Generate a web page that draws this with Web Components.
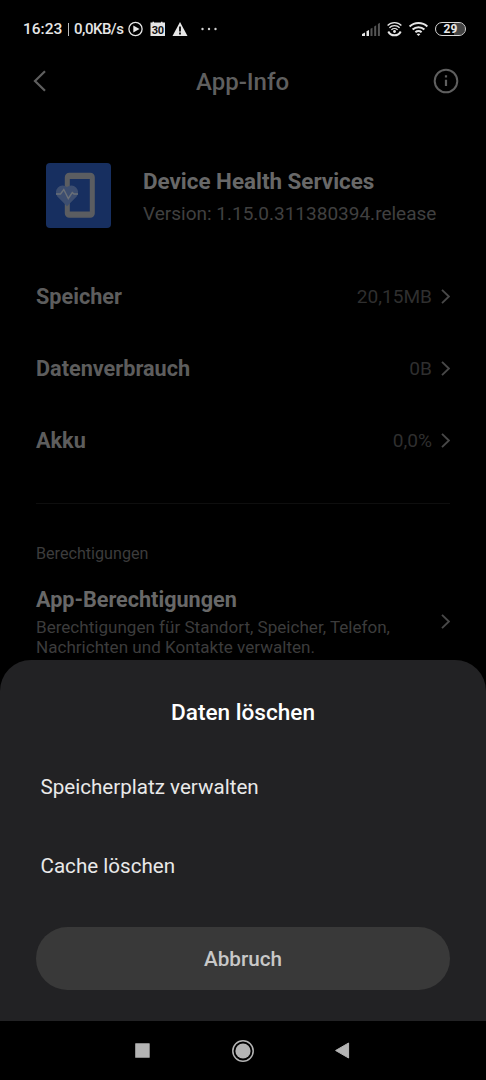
<!DOCTYPE html>
<html lang="de">
<head>
<meta charset="utf-8">
<title>App-Info</title>
<style>
  html, body { margin: 0; height: 100%; background: #000; }
  body { font-family: Roboto, "Noto Sans", sans-serif; overflow: hidden; }
</style>
</head>
<body>
<app-screen>
  <status-bar slot="status" time="16:23" speed="0,0KB/s" battery="29"></status-bar>
  <title-bar>App-Info</title-bar>
  <app-summary name="Device Health Services" version="Version: 1.15.0.311380394.release"></app-summary>
  <info-row value="20,15MB">Speicher</info-row>
  <info-row value="0B">Datenverbrauch</info-row>
  <info-row value="0,0%">Akku</info-row>
  <permission-section heading="Berechtigungen" label="App-Berechtigungen">Berechtigungen für Standort, Speicher, Telefon, Nachrichten und Kontakte verwalten.</permission-section>
  <action-sheet slot="sheet" heading="Daten löschen" cancel="Abbruch">
    <sheet-item>Speicherplatz verwalten</sheet-item>
    <sheet-item>Cache löschen</sheet-item>
  </action-sheet>
  <nav-bar slot="nav"></nav-bar>
</app-screen>

<script>
const chevron = `<svg width="9" height="15" viewBox="0 0 9 15" fill="none" stroke="#484848" stroke-width="1.9"><path d="M1 .9 7.9 7.5 1 14.1"/></svg>`;

class BaseElement extends HTMLElement {
  connectedCallback() {
    if (this.shadowRoot) return;
    this.attachShadow({ mode: "open" });
    this.shadowRoot.innerHTML = this.template();
  }

  attr(name) {
    return this.getAttribute(name) || "";
  }
}

class AppScreen extends BaseElement {
  template() {
    return `
      <style>
        :host { display: flex; flex-direction: column; width: 486px; height: 1080px; background: #000; }
        main { flex: 1; min-height: 0; overflow: hidden; }
      </style>
      <slot name="status"></slot>
      <main><slot></slot></main>
      <slot name="sheet"></slot>
      <slot name="nav"></slot>
    `;
  }
}

class StatusBar extends BaseElement {
  template() {
    return `
      <style>
        :host { display: flex; justify-content: space-between; height: 57px; box-sizing: border-box; padding: 0 20px 0 23px; color: #e6e6e6; font-size: 15.5px; font-weight: 500; }
        .side { display: flex; align-items: center; height: 57px; }
        svg { display: block; flex: none; }
        .time { width: 39px; white-space: nowrap; }
        .bar { width: 1px; height: 13px; margin: 2px 5px 0 6px; background: #bbb; }
        .speed { width: 50px; margin-right: 3px; white-space: nowrap; font-size: 15px; letter-spacing: -.5px; }
        .battery { display: flex; align-items: center; justify-content: center; box-sizing: border-box; width: 31px; height: 14px; margin-left: 7px; border: 1.5px solid #d8d8d8; border-radius: 7px; background: linear-gradient(90deg, #000 62%, #444 62%); background-clip: padding-box; font-size: 12px; font-weight: 700; line-height: 12px; }
        .date { font: 700 11px Roboto, sans-serif; letter-spacing: -.3px; }
      </style>
      <div class="side">
        <span class="time">${this.attr("time")}</span>
        <span class="bar"></span>
        <span class="speed">${this.attr("speed")}</span>
        <svg width="90" height="16" viewBox="0 0 90 16">
          <circle cx="8.5" cy="8" r="6.6" fill="none" stroke="#e6e6e6" stroke-width="1.3"/>
          <path d="M6.300 4.500v7l6.200-3.500z" fill="#e6e6e6"/>
          <path d="M23.500 1.500h2V.8H27v.7h7V.8h1.500v.7H38V15H23.500z" fill="#e6e6e6"/>
          <text class="date" x="30.700" y="12.600" text-anchor="middle" fill="#111">30</text>
          <path d="M53 1l7.500 14h-15z" fill="#e6e6e6"/>
          <path d="M53 5.500v5m0 1.100v1.800" stroke="#111" stroke-width="1.900"/>
          <g fill="#d0d0d0"><circle cx="75.500" cy="8" r="1.200"/><circle cx="82" cy="8" r="1.200"/><circle cx="88.500" cy="8" r="1.200"/></g>
        </svg>
      </div>
      <div class="side">
        <svg width="66" height="16" viewBox="0 0 66 16">
          <path d="M0 15v-2l3-1.400V15zM4.500 15v-4.700l2.500-1.300V15z" fill="#e6e6e6"/>
          <path d="M8.500 15V7.800l2-1V15zM12.200 15V5.500l2-1.200V15zM15.900 15V3l2-1.200V15z" fill="#555"/>
          <g fill="none" stroke="#e6e6e6">
            <path d="M25.600 4.500a9.500 9.500 0 0 1 13.800 0M27.400 6.800a7 7 0 0 1 10.200 0M29.400 8.900a4.400 4.400 0 0 1 6.200 0" stroke-width="1.300"/>
            <path d="M26.300 10.500a6.900 6.900 0 0 0 12.400 0" stroke-width="2"/>
            <path d="M47.600 5.500a13 13 0 0 1 17.800 0M50.600 8.500a8.600 8.600 0 0 1 11.800 0M53.400 11.300a4.600 4.600 0 0 1 6.200 0" stroke-width="2"/>
          </g>
          <circle cx="32.500" cy="10.500" r="1.400" fill="#e6e6e6"/>
          <path d="m56.500 15-1.900-1.800q1.900-1.400 3.800 0z" fill="#e6e6e6"/>
        </svg>
        <span class="battery">${this.attr("battery")}</span>
      </div>
    `;
  }
}

class TitleBar extends BaseElement {
  template() {
    return `
      <style>
        :host { display: flex; align-items: center; justify-content: space-between; height: 48px; padding: 0 27px 0 33px; color: #5f5f5f; }
        .title { padding-top: 2px; font-size: 24px; font-weight: 500; line-height: 30px; }
        svg { display: block; }
      </style>
      <svg width="19" height="24" viewBox="0 0 19 24" fill="none" stroke="#5f5f5f" stroke-width="2.200"><path d="M12 2.200 2 12l10 9.800"/></svg>
      <span class="title"><slot></slot></span>
      <svg width="26" height="26" viewBox="0 0 26 26" fill="none" stroke="#5f5f5f" stroke-width="2">
        <circle cx="13" cy="13" r="11.300"/>
        <path d="M13 7.300v2.200M13 11.700v6.300" stroke-width="2.200"/>
      </svg>
    `;
  }
}

class AppSummary extends BaseElement {
  template() {
    return `
      <style>
        :host { display: flex; align-items: flex-start; height: 65px; padding: 58px 36px 33px 46px; }
        svg { display: block; flex: none; margin-right: 32px; }
        .name { margin-top: 3px; font-size: 22.4px; font-weight: 700; line-height: 30px; color: #686868; white-space: nowrap; }
        .version { margin-top: 1px; font-size: 19px; line-height: 34px; color: #404040; white-space: nowrap; }
      </style>
      <svg width="65" height="65" viewBox="0 0 65 65">
        <rect width="65" height="65" rx="4" fill="#172f60"/>
        <rect x="21.300" y="12.300" width="25" height="40" rx="2" fill="none" stroke="#5b5d61" stroke-width="5"/>
        <path d="M21 13.500h25.500M21 51h25.500" stroke="#5b5d61" stroke-width="5"/>
        <path d="M21 43.300 11.300 33.400A6.800 6.800 0 0 1 21 24a6.800 6.800 0 0 1 9.700 9.400z" fill="#3d4e70"/>
        <path d="M10 31h4.500l3.300-4.500 4.500 9 4-6 1.700 1.500h4" fill="none" stroke="#6a7078" stroke-width="1.400"/>
      </svg>
      <div>
        <div class="name">${this.attr("name")}</div>
        <div class="version">${this.attr("version")}</div>
      </div>
    `;
  }
}

class InfoRow extends BaseElement {
  template() {
    return `
      <style>
        :host { display: flex; align-items: center; height: 72px; padding: 0 36px; }
        .label { flex: 1; margin-top: -1px; font-size: 21.65px; font-weight: 700; color: #5d5d5d; }
        .value { margin-top: -1px; font-size: 19.1px; color: #2f2f2f; margin-right: 9px; }
        svg { display: block; margin-top: -1px; }
      </style>
      <span class="label"><slot></slot></span>
      <span class="value">${this.attr("value")}</span>
      ${chevron}
    `;
  }
}

class PermissionSection extends BaseElement {
  template() {
    return `
      <style>
        :host { display: block; margin: 26px 36px 0; border-top: 1px solid #0e0e0e; }
        .heading { margin-top: 40px; font-size: 16.15px; line-height: 20px; color: #3c3c3c; }
        .row { display: flex; align-items: center; margin-top: 20px; }
        .text { flex: 1; }
        .label { font-size: 21.6px; font-weight: 700; line-height: 32px; color: #686868; }
        .desc { width: 370px; margin-top: 1px; font-size: 17.07px; line-height: 20px; color: #3c3c3c; }
        svg { display: block; margin-top: 2px; }
      </style>
      <div class="heading">${this.attr("heading")}</div>
      <div class="row">
        <div class="text">
          <div class="label">${this.attr("label")}</div>
          <div class="desc"><slot></slot></div>
        </div>
        ${chevron}
      </div>
    `;
  }
}

class ActionSheet extends BaseElement {
  template() {
    return `
      <style>
        :host { display: flex; flex-direction: column; box-sizing: border-box; height: 361px; padding: 35px 36px 31px; border-radius: 31px 31px 0 0; background: #222224; }
        .heading { height: 36px; line-height: 36px; text-align: center; font-size: 22.6px; font-weight: 500; color: #fff; }
        .items { margin-top: 16px; }
        button { all: unset; height: 63px; margin-top: auto; border-radius: 31.5px; background: #393939; color: #c8c8c8; text-align: center; font-size: 20.7px; font-weight: 500; cursor: pointer; }
      </style>
      <div class="heading">${this.attr("heading")}</div>
      <div class="items"><slot></slot></div>
      <button type="button">${this.attr("cancel")}</button>
    `;
  }
}

class SheetItem extends BaseElement {
  template() {
    return `
      <style>
        :host { display: flex; align-items: center; height: 79px; padding-left: 4.5px; font-size: 20.6px; color: #e9e9e9; }
      </style>
      <slot></slot>
    `;
  }
}

class NavBar extends BaseElement {
  template() {
    return `
      <style>
        :host { display: flex; align-items: center; justify-content: space-between; box-sizing: border-box; height: 59px; padding: 0 136px 0 135px; background: #000; }
        svg { display: block; }
      </style>
      <svg width="15" height="15" viewBox="0 0 15 15"><rect x=".2" y=".2" width="14.500" height="14.500" rx=".5" fill="#b4b4b4"/></svg>
      <svg width="22" height="22" viewBox="0 0 22 22"><circle cx="11" cy="11" r="10.200" fill="none" stroke="#b4b4b4" stroke-width="1.500"/><circle cx="11" cy="11" r="7.600" fill="#b4b4b4"/></svg>
      <svg width="15" height="17" viewBox="0 0 15 17"><path d="M13.600 1v15L.6 8.500z" fill="#b4b4b4" stroke="#b4b4b4" stroke-linejoin="round"/></svg>
    `;
  }
}

customElements.define("app-screen", AppScreen);
customElements.define("status-bar", StatusBar);
customElements.define("title-bar", TitleBar);
customElements.define("app-summary", AppSummary);
customElements.define("info-row", InfoRow);
customElements.define("permission-section", PermissionSection);
customElements.define("action-sheet", ActionSheet);
customElements.define("sheet-item", SheetItem);
customElements.define("nav-bar", NavBar);
</script>
</body>
</html>
